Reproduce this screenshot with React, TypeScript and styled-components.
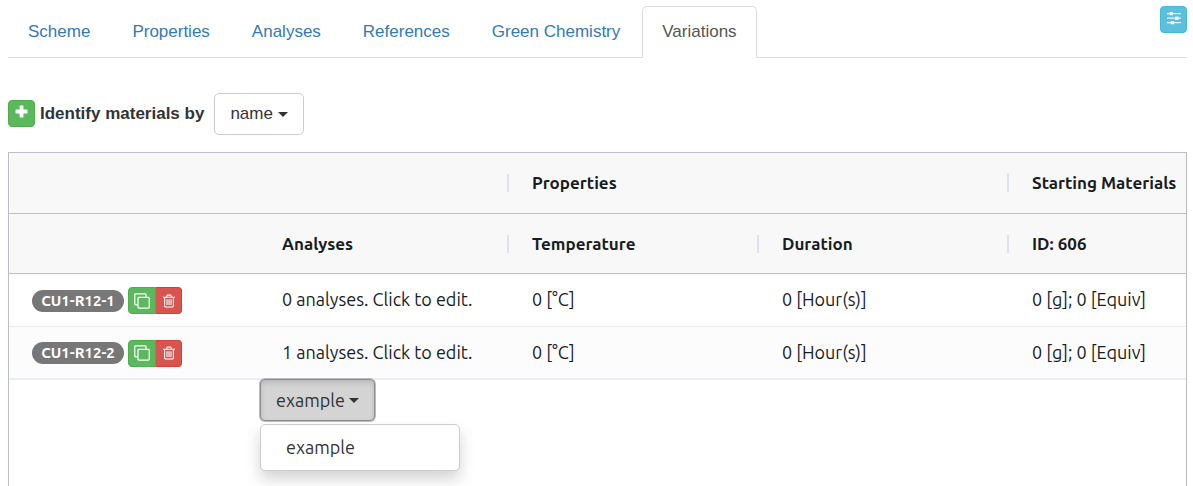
import React from "react";
import styled, { createGlobalStyle, css } from "styled-components";

const uiFont = `"Liberation Sans", Arial, sans-serif`;
const gridFont = `Ubuntu, "Noto Sans", sans-serif`;

const GlobalStyle = createGlobalStyle`
  *, *::before, *::after { box-sizing: border-box; }
  body {
    margin: 0;
    background: #fff;
    color: #333;
    font: 17px/25px ${uiFont};
  }
  button, select { font: inherit; color: inherit; margin: 0; }
`;

const Page = styled.main`
  display: flex;
  flex-direction: column;
  min-height: 100vh;
  padding: 6px 6px 0 8px;
`;

const TabBar = styled.nav`
  display: flex;
  align-items: flex-start;
  justify-content: space-between;
  border-bottom: 1px solid #ddd;
`;

const TabList = styled.ul`
  display: flex;
  gap: 2px;
  margin: 0 0 -1px;
  padding: 0;
  list-style: none;
`;

const Tab = styled.a<{ $active?: boolean }>`
  display: block;
  padding: 12px 19px 13px;
  border: 1px solid transparent;
  border-radius: 5px 5px 0 0;
  color: #337ab7;
  text-decoration: none;
  white-space: nowrap;
  ${(p) =>
    p.$active &&
    css`
      color: #555;
      background: #fff;
      border-color: #ddd #ddd #fff;
    `}
`;

const tones = {
  info: ["#5bc0de", "#46b8da"],
  success: ["#5cb85c", "#4cae4c"],
  danger: ["#d9534f", "#d43f3a"],
};

const IconButton = styled.button<{ $tone: keyof typeof tones }>`
  display: inline-flex;
  align-items: center;
  justify-content: center;
  flex: none;
  width: 27px;
  height: 27px;
  padding: 0;
  border: 1px solid ${(p) => tones[p.$tone][1]};
  border-radius: 4px;
  background: ${(p) => tones[p.$tone][0]};
  color: #fff;
  svg { display: block; }
`;

const AddButton = styled(IconButton)`
  margin-bottom: 1px;
  padding-bottom: 4px;
`;

const SettingsButton = styled(IconButton)`
  padding: 0 0 4px 1px;
`;

const Toolbar = styled.div`
  display: flex;
  align-items: center;
  gap: 5px;
  padding: 35px 0 17px;
`;

const ToolbarLabel = styled.label`
  padding: 0 5px 2px 0;
  font-weight: 700;
`;

const SelectBox = styled.span`
  display: inline-grid;
  align-items: center;
  > * { grid-area: 1 / 1; }
`;

const Select = styled.select`
  appearance: none;
  height: 42px;
  padding: 0 30px 2px 15px;
  border: 1px solid #ccc;
  border-radius: 5px;
  background: #fff;
`;

const Caret = styled.span`
  display: inline-block;
  border: 5px solid transparent;
  border-top-color: currentColor;
  border-bottom: 0;
  pointer-events: none;
`;

const SelectCaret = styled(Caret)`
  justify-self: end;
  margin-right: 16px;
`;

const Grid = styled.section`
  flex: 1;
  overflow: hidden;
  border: 1px solid #babfc7;
  border-bottom: 0;
  font-family: ${gridFont};
  font-size: 18px;
  color: #181d1f;
`;

const Table = styled.table`
  width: 100%;
  min-width: 1170px;
  table-layout: fixed;
  border-collapse: separate;
  border-spacing: 0;
`;

const HeaderCell = styled.th`
  height: 60px;
  padding: 0;
  border-bottom: 1px solid #babfc7;
  background: #f8f8f8;
  text-align: left;
  font-size: 17px;
  font-weight: 700;
  line-height: 18px;
  white-space: nowrap;
`;

const GroupCell = styled(HeaderCell)`
  height: 61px;
`;

const HeaderContent = styled.div<{ $divided?: boolean }>`
  display: flex;
  align-items: center;
  justify-content: space-between;
  height: 18px;
  padding-left: 23px;
  border-right: ${(p) => (p.$divided ? "2px solid #dde2eb" : "0")};
`;

const Row = styled.tr`
  &:nth-child(even) { background: #fcfcfc; }
  &:last-child > td { border-bottom-width: 2px; border-color: #ebeef4; }
`;

const Cell = styled.td`
  height: 53px;
  padding: 0 0 1px 23px;
  border-bottom: 1px solid #ececec;
  white-space: nowrap;
`;

const Tools = styled.div`
  display: flex;
  align-items: center;
  gap: 4px;
  padding-top: 2px;
`;

const Badge = styled.span`
  width: 92px;
  border-radius: 11px;
  background: #777;
  color: #fff;
  font-size: 15px;
  font-weight: 700;
  line-height: 22px;
  text-align: center;
`;

const ButtonGroup = styled.div`
  display: flex;
  ${IconButton}:first-child { width: 28px; border-radius: 4px 0 0 4px; }
  ${IconButton}:last-child { width: 26px; border-radius: 0 4px 4px 0; border-left: 0; }
`;

const CellEditor = styled.div`
  position: relative;
  width: 200px;
  margin: -1px 0 0 251px;
`;

const Toggle = styled.button`
  display: flex;
  align-items: center;
  gap: 4px;
  height: 42px;
  padding: 0 15px;
  border: 1px solid #8c8c8c;
  border-radius: 5px;
  background: #d4d4d4;
  box-shadow: inset 0 3px 5px rgba(0, 0, 0, 0.125), 0 0 0 1px #b9bec6;
  color: #333;
`;

const Menu = styled.ul`
  position: absolute;
  top: 100%;
  left: 0;
  width: 100%;
  margin: 3px 0 0;
  padding: 6px 0;
  border: 1px solid #ccc;
  border-radius: 5px;
  background: #fff;
  box-shadow: 0 8px 15px rgba(0, 0, 0, 0.175);
  list-style: none;
`;

const MenuItem = styled.button`
  display: block;
  width: 100%;
  padding: 4px 25px;
  border: 0;
  background: none;
  color: #333;
  text-align: left;
`;

const SlidersIcon = () => (
  <svg width="15" height="14" viewBox="0 0 15 14" fill="currentColor" aria-hidden="true">
    <path d="M0 2h14v1.2H0zM0 6.5h14v1.2H0zM0 11h14v1.2H0z" opacity=".85" />
    <path d="M2.5 1h3.4v3.2H2.5zM8 5.5h3.4v3.2H8zM3.7 10h3.4v3.2H3.7z" />
  </svg>
);

const PlusIcon = () => (
  <svg width="13" height="13" viewBox="0 0 13 13" fill="currentColor" aria-hidden="true">
    <path d="M5 .5h3a.4.4 0 0 1 .4.4v3.7h3.7a.4.4 0 0 1 .4.4v3a.4.4 0 0 1-.4.4H8.400v3.700a.4.4 0 0 1-.4.4H5a.4.4 0 0 1-.4-.4V8.400H.9A.4.4 0 0 1 .5 8V5a.4.4 0 0 1 .4-.4h3.700V.9A.4.4 0 0 1 5 .5z" />
  </svg>
);

const CopyIcon = () => (
  <svg width="16" height="16" viewBox="0 0 16 16" fill="none" stroke="currentColor" strokeWidth="1.2" strokeLinejoin="round" aria-hidden="true">
    <rect x="4" y="4.300" width="11.200" height="10.800" rx=".8" />
    <path d="M4 11.800H1.600a.8.8 0 0 1-.8-.8V1.600a.8.8 0 0 1 .8-.8h9.600a.8.8 0 0 1 .8.8v2.700" />
  </svg>
);

const TrashIcon = () => (
  <svg width="12" height="14" viewBox="0 0 12 14" fill="none" stroke="currentColor" strokeWidth="1.100" aria-hidden="true">
    <path d="M0 3.200h12M3.500 3l.8-1.900h3.400L8.500 3M1.600 3.400v8.300c0 .8.500 1.300 1.200 1.300h6.400c.7 0 1.200-.5 1.200-1.300V3.400" />
    <path d="M4 5.200v5.800M6 5.200v5.800M8 5.200v5.800" />
  </svg>
);

const tabs = ["Scheme", "Properties", "Analyses", "References", "Green Chemistry", "Variations"];

const rows = [
  { id: "CU1-R12-1", analyses: 0 },
  { id: "CU1-R12-2", analyses: 1 },
];

export default function App() {
  return (
    <>
      <GlobalStyle />
      <Page>
        <TabBar>
          <TabList>
            {tabs.map((tab) => (
              <li key={tab}>
                <Tab href="#" $active={tab === "Variations"}>{tab}</Tab>
              </li>
            ))}
          </TabList>
          <SettingsButton $tone="info" aria-label="Tab settings"><SlidersIcon /></SettingsButton>
        </TabBar>

        <Toolbar>
          <AddButton $tone="success" aria-label="Add variation"><PlusIcon /></AddButton>
          <ToolbarLabel htmlFor="identifier">Identify materials by</ToolbarLabel>
          <SelectBox>
            <Select id="identifier" defaultValue="name">
              <option value="name">name</option>
            </Select>
            <SelectCaret />
          </SelectBox>
        </Toolbar>

        <Grid>
          <Table>
            <colgroup>
              <col width="250" />
              <col width="250" />
              <col width="250" />
              <col width="250" />
              <col />
            </colgroup>
            <thead>
              <tr>
                <GroupCell colSpan={2}><HeaderContent $divided /></GroupCell>
                <GroupCell colSpan={2}><HeaderContent $divided>Properties</HeaderContent></GroupCell>
                <GroupCell><HeaderContent>Starting Materials</HeaderContent></GroupCell>
              </tr>
              <tr>
                <HeaderCell />
                <HeaderCell><HeaderContent $divided>Analyses</HeaderContent></HeaderCell>
                <HeaderCell><HeaderContent $divided>Temperature</HeaderContent></HeaderCell>
                <HeaderCell><HeaderContent $divided>Duration</HeaderContent></HeaderCell>
                <HeaderCell><HeaderContent>ID: 606</HeaderContent></HeaderCell>
              </tr>
            </thead>
            <tbody>
              {rows.map((row) => (
                <Row key={row.id}>
                  <Cell>
                    <Tools>
                      <Badge>{row.id}</Badge>
                      <ButtonGroup>
                        <IconButton $tone="success" aria-label="Copy variation"><CopyIcon /></IconButton>
                        <IconButton $tone="danger" aria-label="Delete variation"><TrashIcon /></IconButton>
                      </ButtonGroup>
                    </Tools>
                  </Cell>
                  <Cell>{`${row.analyses} analyses. Click to edit.`}</Cell>
                  <Cell>0 [°C]</Cell>
                  <Cell>0 [Hour(s)]</Cell>
                  <Cell>0 [g]; 0 [Equiv]</Cell>
                </Row>
              ))}
            </tbody>
          </Table>
          <CellEditor>
            <Toggle aria-haspopup="menu" aria-expanded="true">
              example
              <Caret />
            </Toggle>
            <Menu role="menu">
              <li role="none"><MenuItem role="menuitem">example</MenuItem></li>
            </Menu>
          </CellEditor>
        </Grid>
      </Page>
    </>
  );
}
